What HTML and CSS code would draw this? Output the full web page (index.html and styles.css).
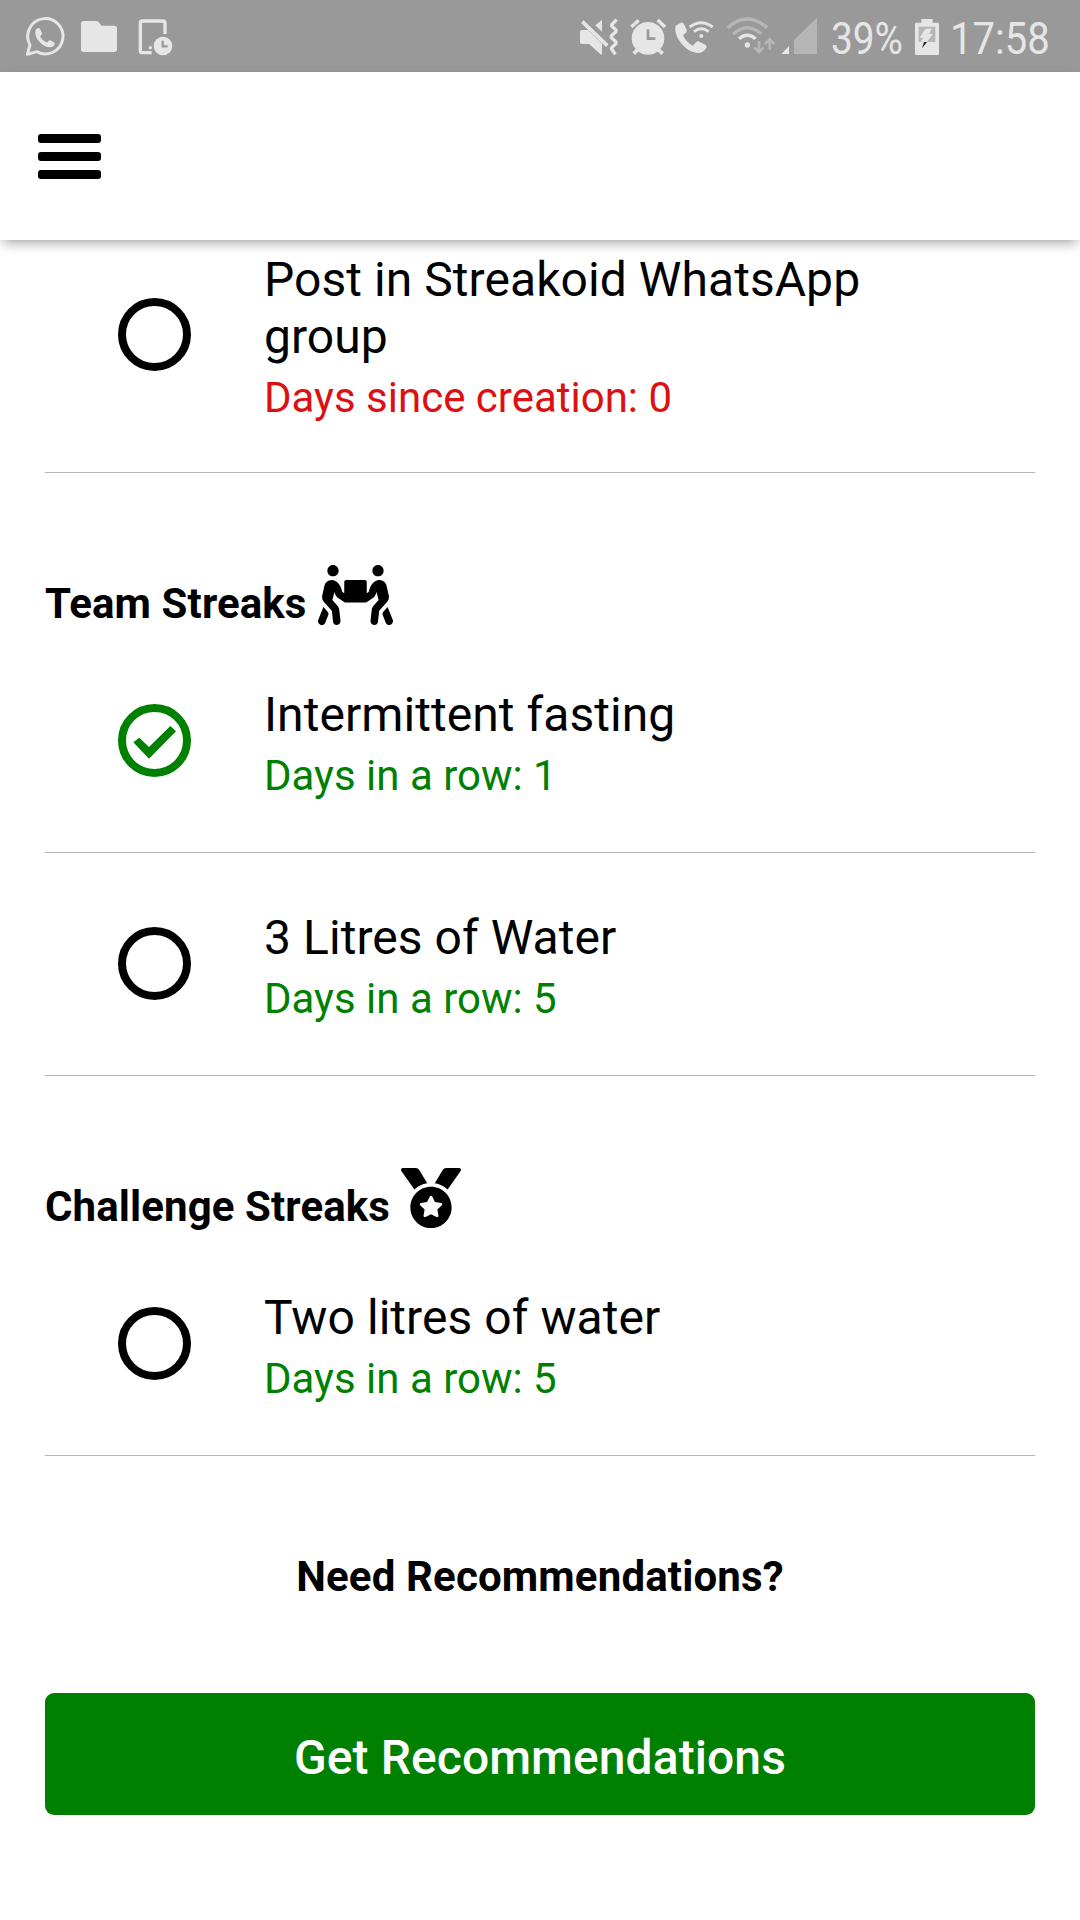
FILE: index.html
```html
<!DOCTYPE html>
<html lang="en">
<head>
<meta charset="utf-8">
<title>Streakoid</title>
<link rel="stylesheet" href="styles.css">
</head>
<body>
<div class="status">
  <svg class="status-notifications" width="180" height="72" viewBox="0 0 540 216" fill="#e6e6e6">
    <path d="M82 163L90 135A53 53 0 1 1 110 155Z" fill="none" stroke="#e6e6e6" stroke-width="9" stroke-linejoin="round"/>
    <path d="M107 89q6-8 12-4l7 15q0 4-6 10q8 13 21 18q7-8 10-7l13 8q1 11-14 13q-16 0-32-17q-16-17-11-36z"/>
    <path d="M251 63h38q4 0 7 4l9 10h38q8 0 8 8v63q0 8-8 8h-92q-8 0-8-8V71q0-8 8-8z"/>
    <path d="M455 158H427q-6 0-6-6V69q0-6 6-6h62q6 0 6 6v33" fill="none" stroke="#e6e6e6" stroke-width="10"/>
    <circle cx="451" cy="143" r="5"/>
    <circle cx="489" cy="138" r="28"/>
    <path d="M488 122v17h15" fill="none" stroke="#999" stroke-width="7"/>
  </svg>
  <svg class="status-indicators" width="262" height="72" viewBox="30 0 786 216" fill="#e6e6e6">
    <!-- muted, vibrate -->
    <path d="M66 90h18l42 41v33q-5 0-8-4l-31-28H66q-6 0-6-6V96q0-6 6-6zM106 76l20-17v36z"/>
    <path d="M67 65L142 137" stroke="#e6e6e6" stroke-width="11"/>
    <path d="M171 59l-13 13q-5 4 0 8l9 8q5 4 0 9l-10 9q-5 4 0 9l10 9q5 4 0 9l-9 8q-5 4 0 9l9 13" transform="translate(-1 0)" fill="none" stroke="#e6e6e6" stroke-width="10"/>
    <!-- alarm -->
    <circle cx="264" cy="115" r="49"/>
    <path d="M214 81l22-20M293 60l22 21" stroke="#e6e6e6" stroke-width="10"/>
    <path d="M234 148l-13 13M294 148l14 13" stroke="#e6e6e6" stroke-width="11"/>
    <path d="M264 88v28h22" fill="none" stroke="#999" stroke-width="8"/>
    <!-- wifi calling -->
    <path d="M350 75l13-7q6-2 9 4l8 17q2 6-4 11l-7 6q10 21 29 31l10-10q4-5 10-2l18 9q6 3 3 9q-9 16-26 16q-31-3-53-34q-17-24-14-44q1-4 4-6z"/>
    <path d="M389 81q34-26 69 0M402 95q22-17 44 0" fill="none" stroke="#e6e6e6" stroke-width="9"/>
    <circle cx="424" cy="108" r="6"/>
    <!-- wifi -->
    <path d="M503 83q59-52 118 0M520 102q42-37 84 0" fill="none" stroke="#b6b6b6" stroke-width="10"/>
    <path d="M537 116q25-21 50 0" fill="none" stroke="#e6e6e6" stroke-width="10"/>
    <circle cx="562" cy="135" r="8"/>
    <path d="M597 124v31M583 142l14 14 14-14M629 150v-31M615 132l14-14 14 14" fill="none" stroke="#b6b6b6" stroke-width="8"/>
    <!-- signal -->
    <path d="M664 162l23-24v24z"/>
    <path d="M702 162v-42l69-67v109z" fill="#b6b6b6"/>
  </svg>
  <span class="battery-level"><span class="condensed">39%</span></span>
  <svg class="battery" width="46" height="72" viewBox="282 0 138 216" fill="#e6e6e6">
    <path d="M334 57h34v11h15q4 0 4 4v89q0 4-4 4h-64q-4 0-4-4V72q0-4 4-4h15z"/>
    <path d="M326 80h50v46h-50z" fill="#b6b6b6"/>
    <path d="M346 86h19l-7 16h11l-19 24h-17l6-13h-10z"/>
    <path d="M342 126h9l-15 19z" fill="#222"/>
  </svg>
  <span class="clock"><span class="condensed">17:58</span></span>
</div>
<header class="header">
  <div class="menu"><span class="menu-bar"></span><span class="menu-bar"></span><span class="menu-bar"></span></div>
</header>
<main class="content">
  <section class="streak streak-first">
    <span class="ring"></span>
    <div class="streak-text"><h3 class="name">Post in Streakoid WhatsApp group</h3><p class="days days-new">Days since creation: 0</p></div>
  </section>

  <h2 class="heading"><span class="heading-text">Team Streaks</span>
    <svg width="75" height="60" viewBox="0 0 640 512"><path d="M128 96c26.500 0 48-21.500 48-48S154.500 0 128 0 80 21.500 80 48s21.500 48 48 48zm384 0c26.500 0 48-21.500 48-48S538.500 0 512 0s-48 21.500-48 48 21.500 48 48 48zm125.700 372.100l-44-110-41.100 46.400-2 18.200 27.700 69.200c5 12.500 17 20.100 29.700 20.100 4 0 8-.7 11.900-2.300 16.400-6.600 24.400-25.200 17.800-41.600zm-34.200-209.800L585 178.100c-4.600-20-18.600-36.800-37.500-44.900-18.500-8-39-6.700-56.100 3.300-22.700 13.400-39.700 34.500-48.100 59.400L432 229.800 416 240v-96c0-8.800-7.200-16-16-16H240c-8.800 0-16 7.200-16 16v96l-16.100-10.200-11.300-33.900c-8.300-25-25.400-46-48.100-59.400-17.200-10-37.600-11.300-56.100-3.300-18.900 8.100-32.900 24.900-37.500 44.900l-18.400 80.200c-4.600 20 .7 41.200 14.400 56.700l67.200 75.900 10.100 92.600C130 499.800 143.800 512 160 512c1.200 0 2.300-.1 3.500-.2 17.600-1.900 30.200-17.700 28.300-35.300l-10.100-92.800c-1.500-13-6.900-25.100-15.600-35l-43.300-49 17.600-70.300 6.800 20.400c4.100 12.500 11.900 23.400 24.500 32.600l51.100 32.500c4.600 2.900 12.100 4.600 17.200 5h160c5.100-.4 12.600-2.100 17.200-5l51.100-32.500c12.600-9.200 20.400-20 24.500-32.600l6.800-20.400 17.600 70.300-43.300 49c-8.700 9.900-14.100 22-15.600 35l-10.100 92.800c-1.900 17.600 10.800 33.400 28.300 35.300 1.200.1 2.300.2 3.500.2 16.100 0 30-12.100 31.800-28.500l10.100-92.600 67.200-75.900c13.600-15.500 19-36.700 14.400-56.700zM46.300 358.100l-44 110c-6.600 16.400 1.400 35 17.800 41.600 16.800 6.600 35.100-1.700 41.600-17.800l27.700-69.200-2-18.200-41.100-46.400z"/></svg>
  </h2>
  <section class="streak">
    <span class="ring ring-done"><svg width="73" height="73" viewBox="0 0 73 73"><path d="M15.300 38.300L21.300 33.700 31 43 52.300 22 58 27.300 31 54.700z" fill="#008000"/></svg></span>
    <div class="streak-text"><h3 class="name">Intermittent fasting</h3><p class="days">Days in a row: 1</p></div>
  </section>
  <section class="streak">
    <span class="ring"></span>
    <div class="streak-text"><h3 class="name">3 Litres of Water</h3><p class="days">Days in a row: 5</p></div>
  </section>

  <h2 class="heading"><span class="heading-text">Challenge Streaks</span>
    <svg width="60" height="60" viewBox="0 0 512 512"><path d="M223.750 130.750L154.620 15.540A31.997 31.997 0 0 0 127.180 0H16.030C3.080 0-4.500 14.570 2.920 25.180l111.270 158.960c29.720-27.770 67.520-46.830 109.560-53.390zM495.970 0H384.820c-11.240 0-21.660 5.900-27.440 15.540l-69.130 115.210c42.040 6.560 79.840 25.620 109.560 53.380L509.080 25.180C516.500 14.570 508.920 0 495.970 0zM256 160c-97.200 0-176 78.800-176 176s78.800 176 176 176 176-78.800 176-176-78.800-176-176-176zm92.520 157.260l-37.930 36.960 8.970 52.220c1.600 9.360-8.260 16.510-16.650 12.090L256 393.880l-46.900 24.650c-8.400 4.450-18.250-2.740-16.650-12.090l8.970-52.220-37.930-36.960c-6.820-6.640-3.050-18.230 6.350-19.590l52.430-7.640 23.430-47.520c2.110-4.280 6.190-6.390 10.280-6.390 4.110 0 8.220 2.140 10.330 6.390l23.430 47.520 52.430 7.640c9.400 1.360 13.170 12.950 6.350 19.590z"/></svg>
  </h2>
  <section class="streak">
    <span class="ring"></span>
    <div class="streak-text"><h3 class="name">Two litres of water</h3><p class="days">Days in a row: 5</p></div>
  </section>

  <h2 class="prompt">Need Recommendations?</h2>
  <button class="action" type="button">Get Recommendations</button>
</main>
</body>
</html>
```
FILE: styles.css
```css
* { box-sizing: border-box; }
body { margin: 0; font-family: Roboto, sans-serif; background: #fff; color: #000; }
h2, h3, p { margin: 0; }
svg { display: block; flex: none; }

.status { display: flex; height: 72px; background: #999; color: #e6e6e6; font-size: 45px; line-height: 53px; }
.status-indicators { margin-left: auto; }
.battery-level { width: 72px; padding-top: 12px; margin-left: -1px; margin-right: 1px; }
.clock { width: 130px; padding-top: 12px; }
.condensed { display: inline-block; transform: scaleX(.86); transform-origin: left; white-space: nowrap; }
.clock .condensed { transform: scaleX(.89); }

.header { display: flex; align-items: center; height: 168px; padding: 1px 0 0 38px; background: #fff; box-shadow: 0 5px 12px -3px rgba(0, 0, 0, .4); }
.menu { display: flex; flex-direction: column; gap: 8.700px; width: 63px; }
.menu-bar { height: 9.300px; border-radius: 3px; background: #000; }

.content { padding: 0 45px; }
.streak { display: flex; align-items: center; padding: 56px 100px 52px 73px; border-bottom: 1px solid #b8b8b8; }
.streak-first { padding-top: 11px; padding-bottom: 50px; }
.ring { flex: none; width: 73px; height: 73px; margin: 0 73px 5px 0; border: 8px solid #000; border-radius: 50%; }
.ring-done { border-color: #008000; }
.ring-done svg { margin: -8px; }
.name { font-weight: 400; font-size: 48px; line-height: 57px; letter-spacing: .06px; }
.days { margin-top: 8px; font-size: 42px; line-height: 49px; color: #008000; }
.days-new { color: #dc1010; }

.heading { display: flex; gap: 11px; height: 157px; padding-top: 92px; font-size: 42px; line-height: 49px; letter-spacing: .1px; }
.heading-text { padding-top: 14px; }

.prompt { padding: 96px 0 92px; font-size: 42px; line-height: 49px; text-align: center; letter-spacing: .15px; }
.action { display: block; width: 100%; height: 122px; padding: 6px 0 0; border: 0; border-radius: 9px; background: #008000; color: #fff; font: 500 48px/57px Roboto, sans-serif; letter-spacing: .08px; }
```
